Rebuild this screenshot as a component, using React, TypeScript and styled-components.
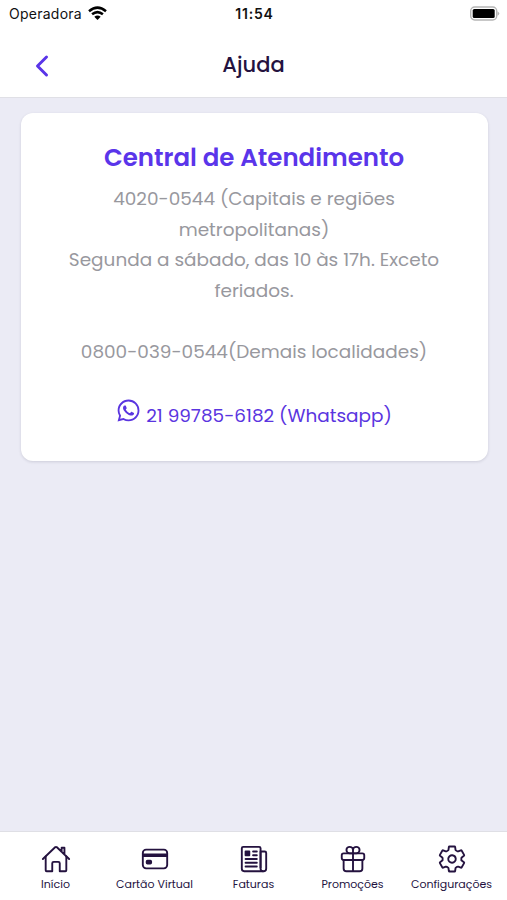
import React from 'react';
import styled, { createGlobalStyle } from 'styled-components';
import {
  IoCardOutline,
  IoChevronBack,
  IoGiftOutline,
  IoHomeOutline,
  IoLogoWhatsapp,
  IoNewspaperOutline,
  IoSettingsOutline,
} from 'react-icons/io5';

const Global = createGlobalStyle`
  * { box-sizing: border-box; }
  body {
    margin: 0;
    font-family: Poppins, Inter, sans-serif;
    color: #24123f;
  }
`;

const Screen = styled.div`
  display: flex;
  flex-direction: column;
  height: 100vh;
  background: #ebebf5;
`;

const StatusBar = styled.div`
  display: grid;
  grid-template-columns: 1fr auto 1fr;
  align-items: center;
  height: 28px;
  padding: 0 7px 2px 9px;
  background: #fff;
  color: #111;
  font-family: Inter, sans-serif;
  font-size: 14px;
`;

const Carrier = styled.div`
  display: flex;
  align-items: center;
  gap: 6px;
  letter-spacing: 0.25px;
`;

const Clock = styled.div`
  font-weight: 600;
  letter-spacing: 0.8px;
`;

const Battery = styled.svg`
  justify-self: end;
`;

const Header = styled.header`
  display: grid;
  grid-template-columns: 83px 1fr 83px;
  align-items: center;
  height: 70px;
  background: #fff;
  border-bottom: 1px solid #e0e0e6;
`;

const BackButton = styled.button`
  display: flex;
  justify-content: center;
  padding: 6px 0 0;
  border: 0;
  background: none;
  color: #5a35e8;
`;

const PageTitle = styled.h1`
  margin: 5px 0 0;
  text-align: center;
  font-size: 21px;
  line-height: 30px;
  font-weight: 500;
`;

const Content = styled.main`
  flex: 1;
  padding: 15px 19.5px 0 20.5px;
`;

const Card = styled.section`
  height: 348px;
  padding-top: 29.5px;
  border-radius: 12px;
  background: #fff;
  box-shadow: 0 1px 3px rgba(30, 30, 60, 0.14);
  text-align: center;
`;

const CardTitle = styled.h2`
  margin: 0 0 11.5px;
  color: #5a35ea;
  font-size: 24.5px;
  line-height: 30px;
  font-weight: 600;
`;

const Paragraph = styled.p`
  margin: 0 0 30.5px;
  color: #98989e;
  font-size: 18.45px;
  line-height: 30.5px;
  white-space: nowrap;
`;

const WhatsappLink = styled.a`
  display: flex;
  justify-content: center;
  gap: 5px;
  color: #5a35e0;
  font-size: 18.45px;
  line-height: 36px;
`;

const TabBar = styled.nav`
  display: grid;
  grid-template-columns: repeat(5, 1fr);
  height: 69px;
  padding: 9px 6px 0;
  background: #fff;
  border-top: 1px solid #dfdfe5;
`;

const Tab = styled.div`
  display: flex;
  flex-direction: column;
  align-items: center;
`;

const TabIcon = styled.span`
  display: flex;
  align-items: center;
  height: 35px;
`;

const TabLabel = styled.span`
  font-size: 11px;
  line-height: 16px;
  white-space: nowrap;
`;

const tabs = [
  { label: 'Início', icon: IoHomeOutline },
  { label: 'Cartão Virtual', icon: IoCardOutline },
  { label: 'Faturas', icon: IoNewspaperOutline },
  { label: 'Promoções', icon: IoGiftOutline },
  { label: 'Configurações', icon: IoSettingsOutline },
];

function WifiIcon() {
  return (
    <svg width="19" height="15" viewBox="0 0 19 15" fill="none" stroke="#000" strokeWidth="2.5">
      <path d="M1 5.2Q9.5-2 18 5.2M4.1 8.3Q9.5 3.9 14.9 8.3" />
      <path d="M6.3 10.7Q9.5 8.4 12.7 10.7L9.5 14Z" fill="#000" stroke="none" />
    </svg>
  );
}

export default function App() {
  return (
    <Screen>
      <Global />
      <StatusBar>
        <Carrier>
          Operadora
          <WifiIcon />
        </Carrier>
        <Clock>11:54</Clock>
        <Battery width="31" height="15" viewBox="0 0 31 15">
          <rect x="1.7" y="1" width="26" height="13" rx="4" fill="#fff" stroke="#b5b5b5" strokeWidth="1.4" />
          <rect x="3.7" y="3" width="22" height="9" rx="1.6" fill="#000" />
          <path d="M28.5 5.2Q32 7.5 28.5 9.8Z" fill="#b5b5b5" />
        </Battery>
      </StatusBar>
      <Header>
        <BackButton aria-label="Voltar">
          <IoChevronBack size={32} />
        </BackButton>
        <PageTitle>Ajuda</PageTitle>
      </Header>
      <Content>
        <Card>
          <CardTitle>Central de Atendimento</CardTitle>
          <Paragraph>
            4020-0544 (Capitais e regiões
            <br />
            metropolitanas)
            <br />
            Segunda a sábado, das 10 às 17h. Exceto
            <br />
            feriados.
          </Paragraph>
          <Paragraph>0800-039-0544(Demais localidades)</Paragraph>
          <WhatsappLink>
            <IoLogoWhatsapp size={25} />
            21 99785-6182 (Whatsapp)
          </WhatsappLink>
        </Card>
      </Content>
      <TabBar>
        {tabs.map(({ label, icon: Icon }) => (
          <Tab key={label}>
            <TabIcon><Icon size={30} /></TabIcon>
            <TabLabel>{label}</TabLabel>
          </Tab>
        ))}
      </TabBar>
    </Screen>
  );
}
